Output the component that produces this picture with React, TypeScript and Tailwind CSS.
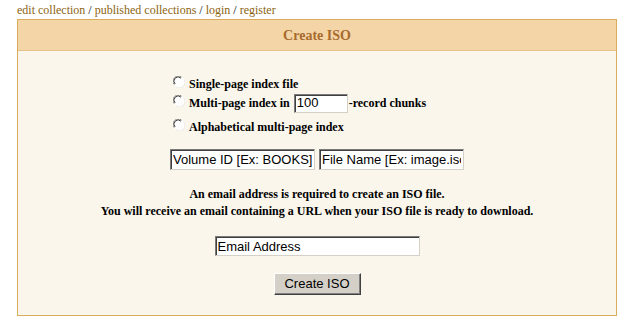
function Radio() {
  return (
    <svg width="12" height="12" viewBox="0 0 12 12" className="shrink-0">
      <circle cx="6" cy="6" r="5.5" fill="#ffffff" />
      <path d="M1.2 8.5 A5.2 5.2 0 0 1 8.5 1.2" stroke="#808080" strokeWidth="1" fill="none" />
      <path d="M2.2 8 A4 4 0 0 1 8 2.2" stroke="#404040" strokeWidth="1" fill="none" />
      <path d="M10.8 3.5 A5.2 5.2 0 0 1 3.5 10.8" stroke="#e8e8e8" strokeWidth="1" fill="none" />
    </svg>
  );
}

const inset =
  "bg-white border border-t-[#7a7a7a] border-l-[#7a7a7a] border-r-[#d4d0c8] border-b-[#d4d0c8] shadow-[inset_1px_1px_0_#404040] font-['Liberation_Sans',Arial,sans-serif] font-normal text-[13px] text-black px-[2px] outline-none";

export default function App() {
  return (
    <div className="w-[638px] h-[333px] bg-white font-['Liberation_Serif','Times_New_Roman',serif] text-black">
      <div className="h-[19px] pl-[17px] pt-[3px] text-[12px] leading-[14px]">
        <a className="text-[#8c6412]">edit collection</a> /{" "}
        <a className="text-[#8c6412]">published collections</a> /{" "}
        <a className="text-[#8c6412]">login</a> /{" "}
        <a className="text-[#8c6412]">register</a>
      </div>

      <div className="ml-[17px] w-[600px] border border-[#d9ad5c] bg-[#faf6ec]">
        <div className="h-[31px] bg-[#f4d5a7] border-b border-[#e6c48a] flex items-center justify-center">
          <span className="text-[14px] font-bold text-[#a86b2d]">Create ISO</span>
        </div>

        <div className="pt-[24px] pb-[20px]">
          <div className="pl-[155px] text-[12px] font-bold">
            <div className="h-[18px] flex items-center gap-[4px]">
              <span className="-mt-[4px]"><Radio /></span>
              <span>Single-page index file</span>
            </div>
            <div className="h-[20px] flex items-center gap-[4px]">
              <span className="-mt-[4px]"><Radio /></span>
              <span>Multi-page index in</span>
              <input className={`${inset} w-[54px] h-[19px] -mr-[3px]`} defaultValue="100" />
              <span>-record chunks</span>
            </div>
            <div className="h-[20px] mt-[4px] flex items-center gap-[4px]">
              <span className="-mt-[4px]"><Radio /></span>
              <span>Alphabetical multi-page index</span>
            </div>
          </div>

          <div className="mt-[12px] flex justify-center gap-[4px]">
            <input className={`${inset} w-[145px] h-[21px]`} defaultValue="Volume ID [Ex: BOOKS]" />
            <input className={`${inset} w-[145px] h-[21px]`} defaultValue="File Name [Ex: image.iso]" />
          </div>

          <div className="mt-[16px] text-center text-[12px] font-bold leading-[17px]">
            <p>An email address is required to create an ISO file.</p>
            <p>You will receive an email containing a URL when your ISO file is ready to download.</p>
          </div>

          <div className="mt-[16px] flex justify-center">
            <input className={`${inset} w-[205px] h-[20px]`} defaultValue="Email Address" />
          </div>

          <div className="mt-[17px] flex justify-center">
            <button className="w-[87px] h-[22px] bg-[#d4d0c8] border border-t-white border-l-white border-r-[#404040] border-b-[#404040] shadow-[inset_-1px_-1px_0_#808080] font-['Liberation_Sans',Arial,sans-serif] text-[13px] text-black">
              Create ISO
            </button>
          </div>
        </div>
      </div>
    </div>
  );
}
